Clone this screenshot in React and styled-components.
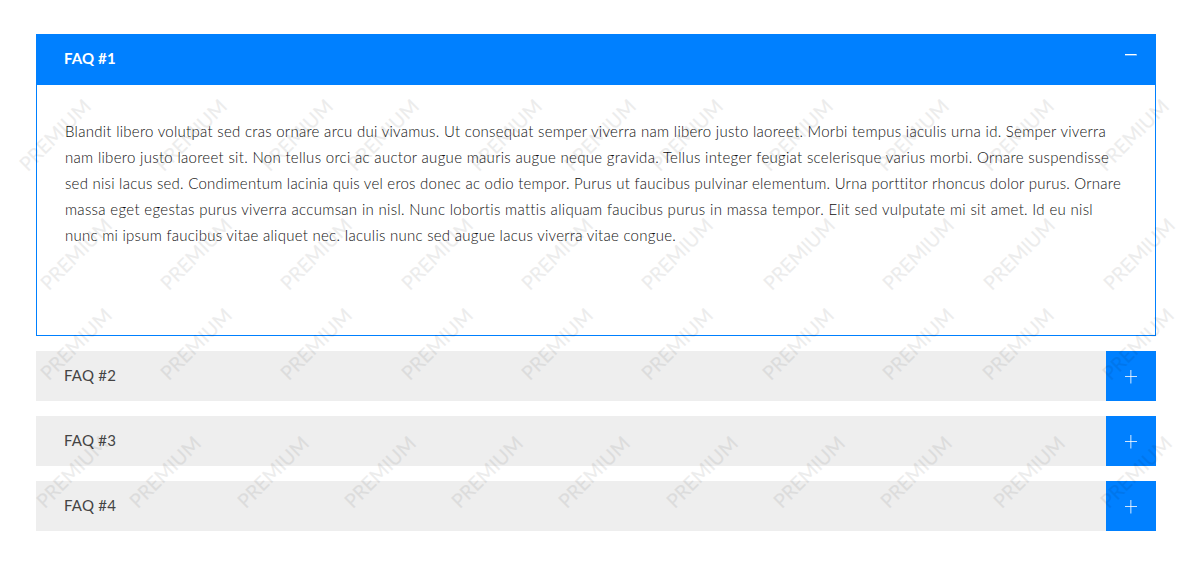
import React, { useState } from "react";
import styled, { createGlobalStyle } from "styled-components";

const GlobalStyle = createGlobalStyle`
  * { box-sizing: border-box; }
  body {
    margin: 0;
    background: #fff;
    font-family: Lato, "Liberation Sans", sans-serif;
    overflow: hidden;
  }
`;

const Page = styled.main`
  position: relative;
  width: 1195px;
  height: 577px;
  padding: 34px 39px 0 36px;
  overflow: hidden;
`;

const Accordion = styled.div`
  display: flex;
  flex-direction: column;
  gap: 15px;
`;

const Item = styled.section`
  border: ${(p) => (p.$open ? "1px solid #0080ff" : "0")};
`;

const Header = styled.button`
  display: flex;
  align-items: stretch;
  justify-content: space-between;
  width: 100%;
  height: 50px;
  padding: 0 0 0 ${(p) => (p.$open ? 27 : 28)}px;
  border: 0;
  background: ${(p) => (p.$open ? "#0080ff" : "#eee")};
  color: ${(p) => (p.$open ? "#fff" : "#444")};
  font: ${(p) => (p.$open ? 700 : 400)} 15px/50px Lato, "Liberation Sans", sans-serif;
  letter-spacing: ${(p) => (p.$open ? 0.15 : 0.25)}px;
  text-align: left;
  cursor: pointer;
`;

const Title = styled.span`
  margin-top: ${(p) => (p.$open ? -2 : -1)}px;
`;

const Toggle = styled.span`
  width: 50px;
  height: 50px;
  background: #0080ff;
  margin-right: ${(p) => (p.$open ? -1 : 0)}px;

  svg { display: block; }
`;

const Body = styled.div`
  height: 250px;
  padding: 33px 28px;
  color: #111;
  font-size: 15px;
  font-weight: 300;
  line-height: 26px;
`;

const Line = styled.span`
  display: block;
  width: ${(p) => p.$width}px;
  letter-spacing: ${(p) => p.$spacing}px;
  white-space: nowrap;
  text-align-last: justify;
`;

const Overlay = styled.div`
  position: absolute;
  inset: 0;
  pointer-events: none;
  opacity: 0.07;
`;

const Mark = styled.span`
  position: absolute;
  left: ${(p) => p.$x}px;
  top: ${(p) => p.$y}px;
  transform: translate(-50%, -50%) rotate(-45deg);
  color: #000;
  -webkit-text-stroke: 0.2px #000;
  font-size: 19.5px;
  line-height: 20px;
`;

const answer = [
  [1041, 0.265, "Blandit libero volutpat sed cras ornare arcu dui vivamus. Ut consequat semper viverra nam libero justo laoreet. Morbi tempus iaculis urna id. Semper viverra"],
  [1044, 0.29, "nam libero justo laoreet sit. Non tellus orci ac auctor augue mauris augue neque gravida. Tellus integer feugiat scelerisque varius morbi. Ornare suspendisse"],
  [1056, 0.235, "sed nisi lacus sed. Condimentum lacinia quis vel eros donec ac odio tempor. Purus ut faucibus pulvinar elementum. Urna porttitor rhoncus dolor purus. Ornare"],
  [1028, 0.3, "massa eget egestas purus viverra accumsan in nisl. Nunc lobortis mattis aliquam faucibus purus in massa tempor. Elit sed vulputate mi sit amet. Id eu nisl"],
  [611, 0.26, "nunc mi ipsum faucibus vitae aliquet nec. Iaculis nunc sed augue lacus viverra vitae congue."],
];

const markRows = [
  [134.5, [55, 191, 297, 383, 505.5, 600, 687, 797, 913, 1017.5, 1133]],
  [254, [76, 196, 316, 437, 557, 677, 798.5, 918, 1018.5, 1138.5]],
  [344, [75.5, 195.5, 315.5, 436.5, 556.5, 676.5, 797.5, 917.5, 1017.5, 1137.5]],
  [472, [72, 165, 273, 380, 487, 594, 702, 809, 916, 1029, 1136]],
];

function Icon({ open }) {
  return open ? (
    <svg width="50" height="50" viewBox="0 0 50 50">
      <path d="M19 19.5h11.5" stroke="#fff" strokeWidth="1" />
      <path d="M19 20.5h12" stroke="#fff" strokeWidth="1" opacity="0.35" />
      <path d="M30.5 19.5h.5" stroke="#fff" opacity="0.5" />
    </svg>
  ) : (
    <svg width="50" height="50" viewBox="0 0 50 50">
      <path d="M19 25.5h12" stroke="#fff" opacity="0.8" />
      <path d="M24.5 19v13.5" stroke="#fff" opacity="0.55" />
      <path d="M25.5 19v13.5" stroke="#fff" opacity="0.3" />
    </svg>
  );
}

export default function App() {
  const [active, setActive] = useState(1);
  return (
    <Page>
      <GlobalStyle />
      <Accordion>
        {[1, 2, 3, 4].map((n) => {
          const open = n === active;
          return (
            <Item key={n} $open={open}>
              <Header $open={open} aria-expanded={open} onClick={() => setActive(n)}>
                <Title $open={open}>FAQ #{n}</Title>
                <Toggle $open={open}><Icon open={open} /></Toggle>
              </Header>
              {open && (
                <Body>
                  {answer.map(([width, spacing, text]) => (
                    <Line key={text} $width={width} $spacing={spacing}>{text}</Line>
                  ))}
                </Body>
              )}
            </Item>
          );
        })}
      </Accordion>
      <Overlay aria-hidden="true">
        {markRows.map(([y, xs]) =>
          xs.map((x) => <Mark key={`${x}-${y}`} $x={x} $y={y}>PREMIUM</Mark>)
        )}
      </Overlay>
    </Page>
  );
}
